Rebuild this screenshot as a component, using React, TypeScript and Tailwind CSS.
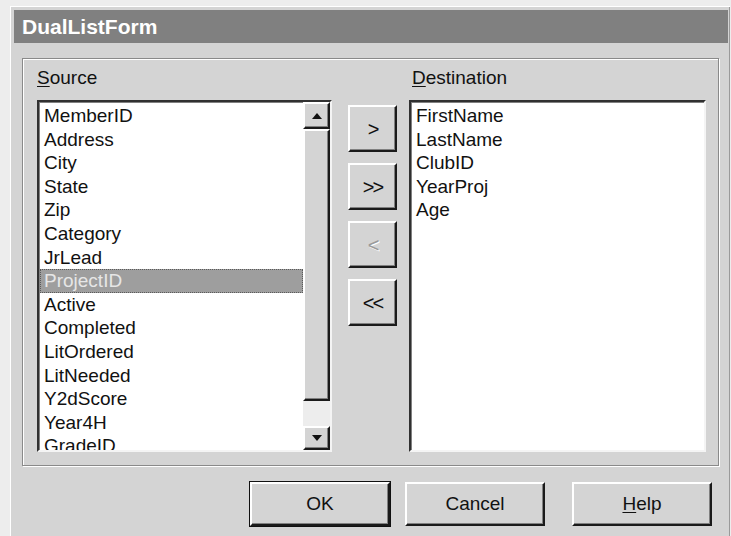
import type { ReactNode } from 'react';

const sourceFields = [
  'MemberID',
  'Address',
  'City',
  'State',
  'Zip',
  'Category',
  'JrLead',
  'ProjectID',
  'Active',
  'Completed',
  'LitOrdered',
  'LitNeeded',
  'Y2dScore',
  'Year4H',
  'GradeID',
];

const destinationFields = ['FirstName', 'LastName', 'ClubID', 'YearProj', 'Age'];

const font = "font-['Liberation_Sans',Arial,sans-serif]";

// Classic raised 3D bevel used by buttons and scrollbar parts.
const raised =
  'border-t-2 border-l-2 border-t-white border-l-white border-r-2 border-b-2 border-r-[#1a1a1a] border-b-[#1a1a1a] shadow-[inset_-1px_-1px_#808080]';

function Arrow({ dir }: { dir: 'up' | 'down' }) {
  return (
    <svg width="10" height="6" viewBox="0 0 10 6">
      {dir === 'up' ? <path d="M5 0 L10 6 L0 6 Z" fill="#111" /> : <path d="M0 0 L10 0 L5 6 Z" fill="#111" />}
    </svg>
  );
}

function ScrollBar() {
  return (
    <div className="flex h-full w-[27px] flex-col bg-[#ededed]">
      <div className={`flex h-[27px] items-center justify-center bg-[#d4d4d4] ${raised}`}>
        <Arrow dir="up" />
      </div>
      <div className={`h-[272px] bg-[#d4d4d4] ${raised}`} />
      <div className="flex-1" />
      <div className={`flex h-[24px] items-center justify-center bg-[#d4d4d4] ${raised}`}>
        <Arrow dir="down" />
      </div>
    </div>
  );
}

function ListBox({
  items,
  selected,
  scroll,
}: {
  items: string[];
  selected?: string;
  scroll?: boolean;
}) {
  return (
    <div className="flex h-[352px] border-t-2 border-l-2 border-t-[#303030] border-l-[#303030] border-r-2 border-b-2 border-r-[#f4f4f4] border-b-[#f4f4f4] bg-white shadow-[inset_1px_1px_#808080]">
      <div className="flex-1 overflow-hidden pt-[2px]">
        {items.map((item) => (
          <div
            key={item}
            className={`ml-[1px] h-[23.6px] pl-[4px] text-[19px] leading-[23.6px] ${
              item === selected
                ? 'bg-[#9e9e9e] text-[#e6e6e6] outline-1 outline-dotted outline-offset-[-1px] outline-[#5a5a5a]'
                : 'text-[#111]'
            }`}
          >
            {item}
          </div>
        ))}
      </div>
      {scroll && <ScrollBar />}
    </div>
  );
}

function MoveButton({ children, disabled }: { children: ReactNode; disabled?: boolean }) {
  return (
    <button
      className={`flex h-[47px] w-[49px] items-center justify-center bg-[#d4d4d4] text-[20px] tracking-[-2px] ${raised} ${
        disabled ? 'text-[#9a9a9a] [text-shadow:1px_1px_#fff]' : 'text-[#111]'
      }`}
    >
      {children}
    </button>
  );
}

function DialogButton({ children, isDefault }: { children: ReactNode; isDefault?: boolean }) {
  return (
    <button
      className={`flex h-[44px] w-[140px] items-center justify-center bg-[#d4d4d4] text-[19px] text-[#111] ${raised} ${
        isDefault ? 'outline-1 outline-[#111]' : ''
      }`}
    >
      {children}
    </button>
  );
}

export default function App() {
  return (
    <div className={`h-[536px] w-[731px] overflow-hidden bg-[#ededed] pl-[10px] pt-[6px] ${font}`}>
      <div className="h-[532px] w-[720px] border-l border-t border-white bg-[#d4d4d4] p-[3px] pr-[2px] shadow-[inset_-1px_0_#9a9a9a]">
        <div className="flex h-[33px] items-center bg-[#808080] pl-[8px] text-[21px] font-bold text-white">
          DualListForm
        </div>

        <div className="ml-[8px] mt-[15px] flex h-[408px] w-[697px] border border-[#8a8a8a] pl-[14px] shadow-[inset_1px_1px_#fff,1px_1px_#fff]">
          <div className="w-[295px] pt-[8px]">
            <div className="mb-[11px] h-[22px] text-[19px] leading-[22px] text-[#111]">
              <span className="underline underline-offset-2">S</span>ource
            </div>
            <ListBox items={sourceFields} selected="ProjectID" scroll />
          </div>

          <div className="ml-[16px] flex w-[49px] flex-col gap-[11px] pt-[46px]">
            <MoveButton>&gt;</MoveButton>
            <MoveButton>&gt;&gt;</MoveButton>
            <MoveButton disabled>&lt;</MoveButton>
            <MoveButton>&lt;&lt;</MoveButton>
          </div>

          <div className="ml-[12px] w-[297px] pt-[8px]">
            <div className="mb-[11px] h-[22px] pl-[3px] text-[19px] leading-[22px] text-[#111]">
              <span className="underline underline-offset-2">D</span>estination
            </div>
            <ListBox items={destinationFields} />
          </div>
        </div>

        <div className="mt-[16px] flex">
          <div className="ml-[236px]">
            <DialogButton isDefault>OK</DialogButton>
          </div>
          <div className="ml-[15px]">
            <DialogButton>Cancel</DialogButton>
          </div>
          <div className="ml-[27px]">
            <DialogButton>
              <span className="underline underline-offset-2">H</span>elp
            </DialogButton>
          </div>
        </div>
      </div>
    </div>
  );
}
